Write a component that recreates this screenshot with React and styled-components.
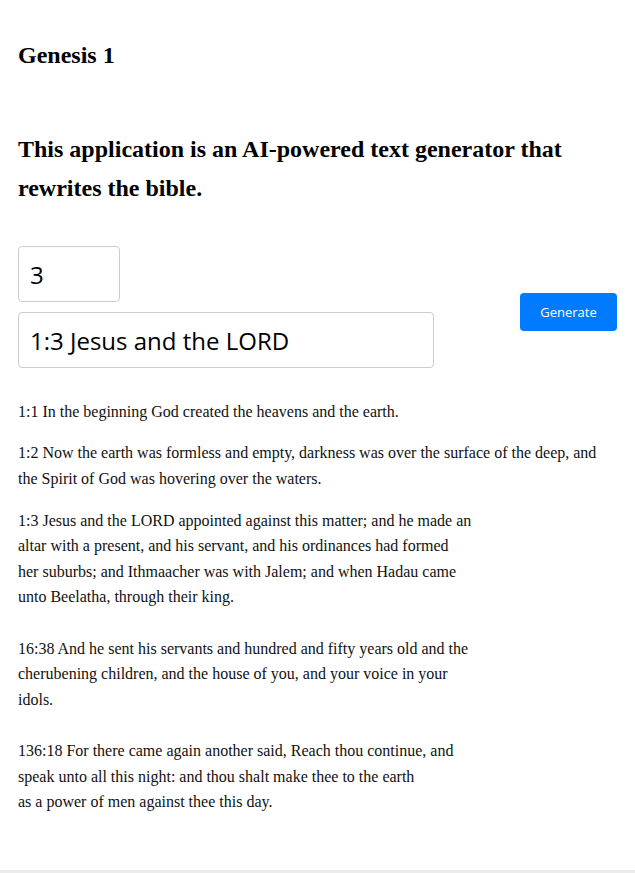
import styled, { createGlobalStyle } from 'styled-components';
import { useState } from 'react';

const GlobalStyle = createGlobalStyle`
    body {
        margin: 0;
        background: #fff;
        font-family: "Liberation Serif", "Times New Roman", serif;
        color: #000;
    }
`;

const Page = styled.div`
    min-height: 870px;
    display: flex;
    flex-direction: column;
`;

const Main = styled.main`
    flex: 1;
    padding: 36px 18px 55px;
`;

const Book = styled.h2`
    margin: 0;
    font-size: 24px;
    font-weight: 700;
    line-height: 38.4px;
`;

const Intro = styled.h2`
    margin: 56px 0 0;
    font-size: 24px;
    font-weight: 700;
    line-height: 38.4px;
`;

const Controls = styled.div`
    display: flex;
    justify-content: space-between;
    align-items: flex-start;
    margin-top: 39px;
`;

const Fields = styled.div`
    display: flex;
    flex-direction: column;
    gap: 10px;
`;

const Field = styled.input`
    box-sizing: border-box;
    width: ${({ $width }) => $width}px;
    height: 56px;
    padding: 0 11px;
    border: 1px solid #ccc;
    border-radius: 4px;
    font-family: "Open Sans", "Noto Sans", sans-serif;
    font-size: 24px;
    color: #000;
    outline: none;
`;

const Button = styled.button`
    margin-top: 47px;
    width: 97px;
    height: 38px;
    border: none;
    border-radius: 4px;
    background: #007bff;
    color: #fff;
    font-family: "Open Sans", "Noto Sans", sans-serif;
    font-size: 13px;
    cursor: pointer;
`;

const Output = styled.div`
    margin-top: 30.6px;
`;

const Verse = styled.p`
    margin: 0 0 16px;
    font-size: 16px;
    line-height: 25.6px;
    color: #111;
    white-space: pre-line;

    &:last-child {
        margin-bottom: 0;
    }
`;

const Footer = styled.footer`
    height: 3px;
    background: #ececec;
`;

const generated = `1:3 Jesus and the LORD appointed against this matter; and he made an
altar with a present, and his servant, and his ordinances had formed
her suburbs; and Ithmaacher was with Jalem; and when Hadau came
unto Beelatha, through their king.

16:38 And he sent his servants and hundred and fifty years old and the
cherubening children, and the house of you, and your voice in your
idols.

136:18 For there came again another said, Reach thou continue, and
speak unto all this night: and thou shalt make thee to the earth
as a power of men against thee this day.`;

const App = () => {
    const [verse, setVerse] = useState('3');
    const [prompt, setPrompt] = useState('1:3 Jesus and the LORD');

    return (
        <Page>
            <GlobalStyle />
            <Main>
                <Book>Genesis 1</Book>
                <Intro>
                    This application is an AI-powered text generator that rewrites the bible.
                </Intro>

                <Controls>
                    <Fields>
                        <Field $width={102} value={verse} onChange={(e) => setVerse(e.target.value)} />
                        <Field $width={416} value={prompt} onChange={(e) => setPrompt(e.target.value)} />
                    </Fields>
                    <Button>Generate</Button>
                </Controls>

                <Output>
                    <Verse>1:1 In the beginning God created the heavens and the earth.</Verse>
                    <Verse>
                        1:2 Now the earth was formless and empty, darkness was over the surface of the deep, and the Spirit of God was hovering over the waters.
                    </Verse>
                    <Verse>{generated}</Verse>
                </Output>
            </Main>
            <Footer />
        </Page>
    );
};

export default App;
